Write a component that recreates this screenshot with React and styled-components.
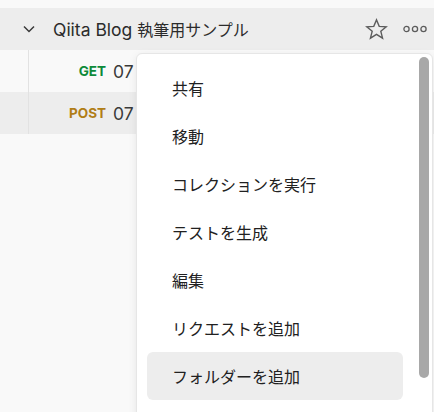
import styled, { createGlobalStyle } from "styled-components";

const GlobalStyle = createGlobalStyle`
  html, body {
    margin: 0;
    padding: 0;
    background: #f9f9f9;
  }
  body {
    font-family: Inter, "Noto Sans CJK JP", sans-serif;
    color: #212121;
  }
`;

const Page = styled.div`
  position: relative;
  width: 434px;
  height: 412px;
  overflow: hidden;
  background: #f9f9f9;
  padding-top: 8px;
  box-sizing: border-box;
`;

const Header = styled.div`
  display: flex;
  align-items: center;
  height: 42px;
  background: #ededed;
  padding: 0 7px 0 22px;
`;

const Title = styled.span`
  flex: 1;
  margin-left: 17px;
  font-size: 17.5px;
  color: #2b2b2b;
  white-space: nowrap;
`;

const TitleJa = styled.span`
  font-family: "Noto Sans CJK JP", sans-serif;
  font-size: 16px;
`;

const Actions = styled.div`
  display: flex;
  align-items: center;
  gap: 15px;
`;

const Row = styled.div`
  display: flex;
  align-items: center;
  height: 42px;
  background: ${(p) => (p.$active ? "#ededed" : "#f9f9f9")};
`;

const Guide = styled.div`
  align-self: stretch;
  width: 28px;
  border-right: 1px solid #e2e2e2;
`;

const Method = styled.span`
  width: 77px;
  text-align: right;
  font-size: 13.5px;
  font-weight: 700;
  color: ${(p) => p.$color};
`;

const RowName = styled.span`
  margin-left: 7px;
  font-size: 17.5px;
  color: #3a3a3a;
`;

const Menu = styled.div`
  position: absolute;
  left: 136px;
  top: 53px;
  width: 297px;
  height: 400px;
  box-sizing: border-box;
  display: flex;
  background: #ffffff;
  border: 1px solid #e6e6e6;
  border-radius: 6px;
  box-shadow: 0 2px 8px rgba(0, 0, 0, 0.08);
`;

const List = styled.div`
  display: flex;
  flex-direction: column;
  width: 256px;
  padding: 10px 16px 0 10px;
`;

const Item = styled.div`
  display: flex;
  align-items: center;
  height: 48px;
  padding-left: 25px;
  border-radius: 6px;
  font-family: "Noto Sans CJK JP", sans-serif;
  font-size: 16px;
  color: #212121;
  background: ${(p) => (p.$hover ? "#ededed" : "transparent")};
`;

const Track = styled.div`
  width: 10px;
  margin: 3px 3px 0 0;
`;

const Thumb = styled.div`
  height: 321px;
  border-radius: 5px;
  background: #a8a8a8;
`;

const Chevron = () => (
  <svg width="14" height="14" viewBox="0 0 14 14">
    <path d="M2 4.5 L7 9.5 L12 4.5" fill="none" stroke="#3a3a3a" strokeWidth="1.5" />
  </svg>
);

const Star = () => (
  <svg width="23" height="23" viewBox="0 0 22 22">
    <path
      d="M11 1.8 L13.6 8 L20.3 8.4 L15.1 12.7 L16.8 19.3 L11 15.6 L5.2 19.3 L6.9 12.7 L1.7 8.4 L8.4 8 Z"
      fill="none"
      stroke="#5c5c5c"
      strokeWidth="1.3"
      strokeLinejoin="miter"
    />
  </svg>
);

const Dots = () => (
  <svg width="24" height="8" viewBox="0 0 24 8">
    {[3.5, 12, 20.5].map((cx) => (
      <circle key={cx} cx={cx} cy="4" r="2.6" fill="none" stroke="#5c5c5c" strokeWidth="1.3" />
    ))}
  </svg>
);

const items = [
  "共有",
  "移動",
  "コレクションを実行",
  "テストを生成",
  "編集",
  "リクエストを追加",
  "フォルダーを追加",
];

export default function App() {
  return (
    <>
      <GlobalStyle />
      <Page>
        <Header>
          <Chevron />
          <Title>
            Qiita Blog <TitleJa>執筆用サンプル</TitleJa>
          </Title>
          <Actions>
            <Star />
            <Dots />
          </Actions>
        </Header>
        <Row>
          <Guide />
          <Method $color="#0d8a3a">GET</Method>
          <RowName>07</RowName>
        </Row>
        <Row $active>
          <Guide />
          <Method $color="#b07d16">POST</Method>
          <RowName>07</RowName>
        </Row>
        <Menu>
          <List>
            {items.map((label, i) => (
              <Item key={label} $hover={i === items.length - 1}>
                {label}
              </Item>
            ))}
          </List>
          <Track>
            <Thumb />
          </Track>
        </Menu>
      </Page>
    </>
  );
}
